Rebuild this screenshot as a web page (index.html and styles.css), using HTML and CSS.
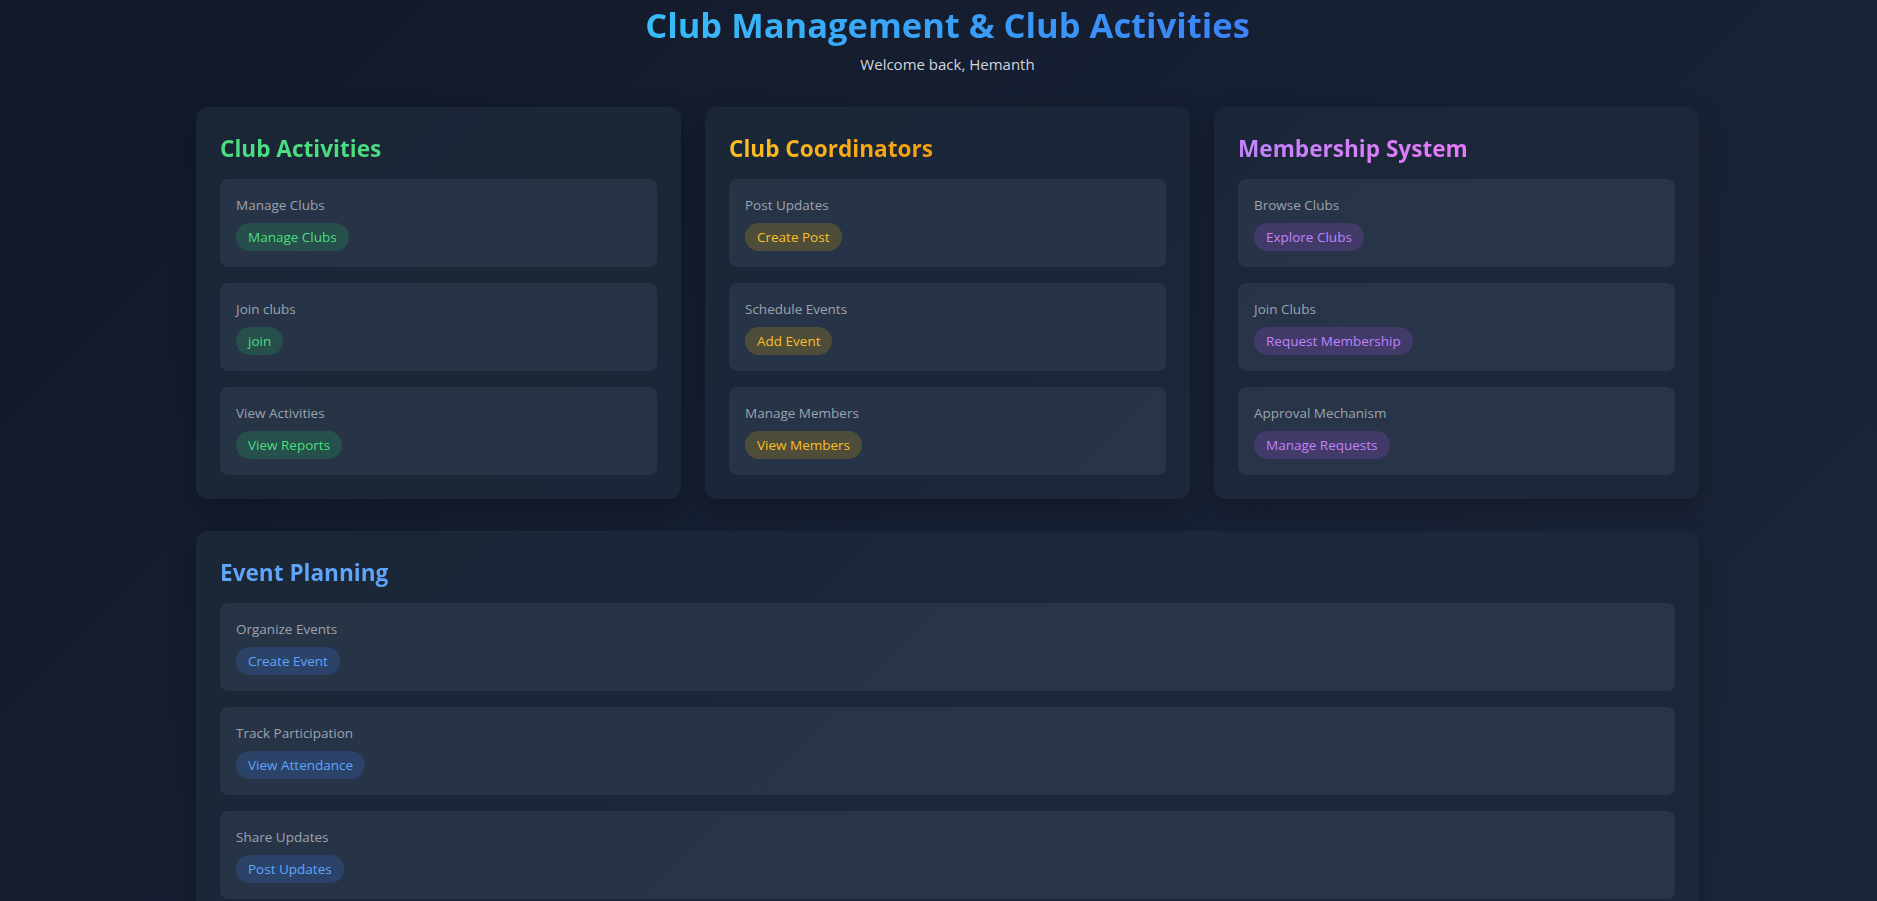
FILE: index.html
```html
<!DOCTYPE html>
<html lang="en">
<head>
<meta charset="utf-8">
<title>Club Management &amp; Club Activities</title>
<link rel="stylesheet" href="styles.css">
</head>
<body>
<div class="page">
  <header class="header">
    <h1 class="title">Club Management &amp; Club Activities</h1>
    <p class="welcome">Welcome back, Hemanth</p>
  </header>

  <div class="grid">
    <section class="card">
      <h2 class="card-title green">Club Activities</h2>
      <div class="items">
        <div class="item"><div class="label">Manage Clubs</div><button class="btn btn-green">Manage Clubs</button></div>
        <div class="item"><div class="label">Join clubs</div><button class="btn btn-green">join</button></div>
        <div class="item"><div class="label">View Activities</div><button class="btn btn-green">View Reports</button></div>
      </div>
    </section>

    <section class="card">
      <h2 class="card-title yellow">Club Coordinators</h2>
      <div class="items">
        <div class="item"><div class="label">Post Updates</div><button class="btn btn-yellow">Create Post</button></div>
        <div class="item"><div class="label">Schedule Events</div><button class="btn btn-yellow">Add Event</button></div>
        <div class="item"><div class="label">Manage Members</div><button class="btn btn-yellow">View Members</button></div>
      </div>
    </section>

    <section class="card">
      <h2 class="card-title purple">Membership System</h2>
      <div class="items">
        <div class="item"><div class="label">Browse Clubs</div><button class="btn btn-purple">Explore Clubs</button></div>
        <div class="item"><div class="label">Join Clubs</div><button class="btn btn-purple">Request Membership</button></div>
        <div class="item"><div class="label">Approval Mechanism</div><button class="btn btn-purple">Manage Requests</button></div>
      </div>
    </section>
  </div>

  <section class="card wide">
    <h2 class="card-title blue">Event Planning</h2>
    <div class="items">
      <div class="item"><div class="label">Organize Events</div><button class="btn btn-blue">Create Event</button></div>
      <div class="item"><div class="label">Track Participation</div><button class="btn btn-blue">View Attendance</button></div>
      <div class="item"><div class="label">Share Updates</div><button class="btn btn-blue">Post Updates</button></div>
    </div>
  </section>
</div>
</body>
</html>
```

FILE: styles.css
```css
* { box-sizing: border-box; }

html, body {
  margin: 0;
  padding: 0;
}

body {
  min-height: 100vh;
  background: linear-gradient(135deg, #111827 0%, #172033 50%, #1c2639 100%);
  font-family: "Open Sans", "Noto Sans", "Liberation Sans", sans-serif;
  color: #e5e7eb;
  padding-left: 18px;
  overflow: hidden;
}

.page {
  width: 1503px;
  margin: 0 auto;
}

.header {
  text-align: center;
  padding-top: 2px;
}

.title {
  margin: 0;
  font-size: 34.5px;
  font-weight: 700;
  line-height: 46px;
  background: linear-gradient(90deg, #38bdf8, #3b82f6);
  -webkit-background-clip: text;
  background-clip: text;
  color: transparent;
  display: inline-block;
}

.welcome {
  margin: 6px 0 0;
  font-size: 15px;
  line-height: 20px;
  color: #d1d5db;
}

.grid {
  margin-top: 33px;
  display: grid;
  grid-template-columns: repeat(3, 1fr);
  gap: 24px;
}

.card {
  background: rgba(30, 41, 59, 0.75);
  border-radius: 12px;
  padding: 24px;
  box-shadow: 0 10px 25px rgba(0, 0, 0, 0.25);
}

.card.wide {
  margin-top: 32px;
}

.card-title {
  margin: 2px 0 14px;
  font-size: 22.6px;
  font-weight: 700;
  line-height: 32px;
  display: inline-block;
  -webkit-background-clip: text;
  background-clip: text;
  color: transparent;
}

.green { background-image: linear-gradient(90deg, #4ade80, #4ade80); }
.yellow { background-image: linear-gradient(90deg, #fbbf24, #f59e0b); }
.purple { background-image: linear-gradient(90deg, #c084fc, #e879f9); }
.blue { background-image: linear-gradient(90deg, #60a5fa, #60a5fa); }

.items {
  display: flex;
  flex-direction: column;
  gap: 16px;
}

.item {
  background: rgba(51, 65, 85, 0.5);
  border-radius: 8px;
  padding: 16px;
  display: flex;
  flex-direction: column;
  align-items: flex-start;
}

.label {
  font-size: 13.5px;
  line-height: 20px;
  color: #9ca3af;
  margin-bottom: 8px;
}

.btn {
  font-family: inherit;
  font-size: 13.5px;
  line-height: 20px;
  padding: 4px 12px;
  border: none;
  border-radius: 999px;
  cursor: pointer;
}

.btn-green { background: rgba(34, 197, 94, 0.2); color: #4ade80; }
.btn-yellow { background: rgba(234, 179, 8, 0.2); color: #fbbf24; }
.btn-purple { background: rgba(168, 85, 247, 0.2); color: #c084fc; }
.btn-blue { background: rgba(59, 130, 246, 0.2); color: #60a5fa; }
```
